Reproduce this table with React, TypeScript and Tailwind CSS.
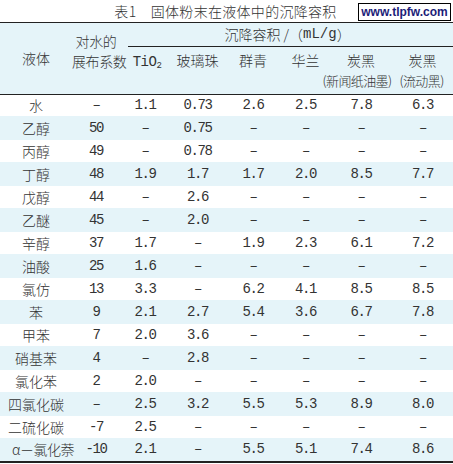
import React from "react";

const cjk = { fontFamily: '"Noto Sans CJK SC", "Noto Sans", sans-serif' };
const mono = { fontFamily: '"Liberation Mono", "Noto Sans CJK SC", monospace' };

const rows: string[][] = [
  ["水", "–", "1.1", "0.73", "2.6", "2.5", "7.8", "6.3"],
  ["乙醇", "50", "–", "0.75", "–", "–", "–", "–"],
  ["丙醇", "49", "–", "0.78", "–", "–", "–", "–"],
  ["丁醇", "48", "1.9", "1.7", "1.7", "2.0", "8.5", "7.7"],
  ["戊醇", "44", "–", "2.6", "–", "–", "–", "–"],
  ["乙醚", "45", "–", "2.0", "–", "–", "–", "–"],
  ["辛醇", "37", "1.7", "–", "1.9", "2.3", "6.1", "7.2"],
  ["油酸", "25", "1.6", "–", "–", "–", "–", "–"],
  ["氯仿", "13", "3.3", "–", "6.2", "4.1", "8.5", "8.5"],
  ["苯", "9", "2.1", "2.7", "5.4", "3.6", "6.7", "7.8"],
  ["甲苯", "7", "2.0", "3.6", "–", "–", "–", "–"],
  ["硝基苯", "4", "–", "2.8", "–", "–", "–", "–"],
  ["氯化苯", "2", "2.0", "–", "–", "–", "–", "–"],
  ["四氯化碳", "–", "2.5", "3.2", "5.5", "5.3", "8.9", "8.0"],
  ["二硫化碳", "-7", "2.5", "–", "–", "–", "–", "–"],
  ["α－氯化萘", "-10", "2.1", "–", "5.5", "5.1", "7.4", "8.6"],
];

// column widths in px, they add up to the page width
const widths = [72, 48, 50, 55, 56, 49, 62, 61];

export default function App() {
  return (
    <div className="w-[453px] h-[464px] bg-white text-[#333] overflow-hidden">
      <div className="relative h-[22px] flex items-center justify-center text-[14px] font-light" style={cjk}>
        <span className="ml-[-2px] tracking-[0.3px]">表1　固体粉末在液体中的沉降容积</span>
        <div
          className="absolute right-[2px] top-[3px] h-[18px] w-[93px] border border-black flex items-center justify-center text-[12px] font-bold text-[#1c1c78]"
          style={{ fontFamily: '"Liberation Sans", Arial, sans-serif' }}
        >
          www.tlpfw.com
        </div>
      </div>
      <table className="table-fixed border-collapse w-[453px] border-t-[1.5px] border-b-2 border-[#222]">
        <colgroup>
          {widths.map((w, i) => (
            <col key={i} style={{ width: w }} />
          ))}
        </colgroup>
        <thead className="bg-[#e5f4f9] text-[14px] font-light" style={cjk}>
          <tr className="h-[24px]">
            <td rowSpan={2} className="text-center align-middle p-0">液体</td>
            <td rowSpan={2} className="text-center align-top p-0 pt-[8px] leading-[20px] whitespace-nowrap tracking-[-0.4px]">
              对水的
              <br />
              展布系数
            </td>
            <td colSpan={6} className="p-0 align-bottom">
              <div className="ml-[8px] h-[24px] border-b border-[#222] flex items-center justify-center pr-[6px]">
                沉降容积 /（<span className="font-normal" style={mono}>mL/g</span>）
              </div>
            </td>
          </tr>
          <tr className="h-[47px] border-b border-[#222]">
            <td className="text-center align-top p-0 pt-[3px] pl-[4px] leading-[20px]">
              <span className="font-normal tracking-[-0.5px]" style={mono}>
                TiO<sub className="text-[9px]">2</sub>
              </span>
            </td>
            <td className="text-center align-top p-0 pt-[3px] leading-[20px]">玻璃珠</td>
            <td className="text-center align-top p-0 pt-[3px] leading-[20px]">群青</td>
            <td className="text-center align-top p-0 pt-[3px] leading-[20px]">华兰</td>
            <td className="text-center align-top p-0 pt-[3px] leading-[20px] whitespace-nowrap">
              炭黑
              <br />
              <span className="text-[13px] tracking-[-0.6px] ml-[-8px]">(新闻纸油墨)</span>
            </td>
            <td className="text-center align-top p-0 pt-[3px] leading-[20px] whitespace-nowrap">
              炭黑
              <br />
              <span className="text-[13px] tracking-[-0.6px] ml-[-2px]">(流动黑)</span>
            </td>
          </tr>
        </thead>
        <tbody className="text-[14px]">
          {rows.map((r, i) => (
            <tr key={i} className={i % 2 === 0 ? "h-[22px] bg-white" : "h-[24px] bg-[#e5f4f9]"}>
              {r.map((c, j) => (
                <td
                  key={j}
                  className={
                    j === 0
                      ? "p-0 text-center whitespace-nowrap font-light"
                      : "p-0 text-center whitespace-nowrap tracking-[-1.4px]"
                  }
                  style={j === 0 ? cjk : mono}
                >
                  {j === 0 && c.startsWith("α") ? (
                    <span className="inline-block ml-[12px] tracking-[-0.5px]">{c}</span>
                  ) : (
                    c
                  )}
                </td>
              ))}
            </tr>
          ))}
        </tbody>
      </table>
    </div>
  );
}
